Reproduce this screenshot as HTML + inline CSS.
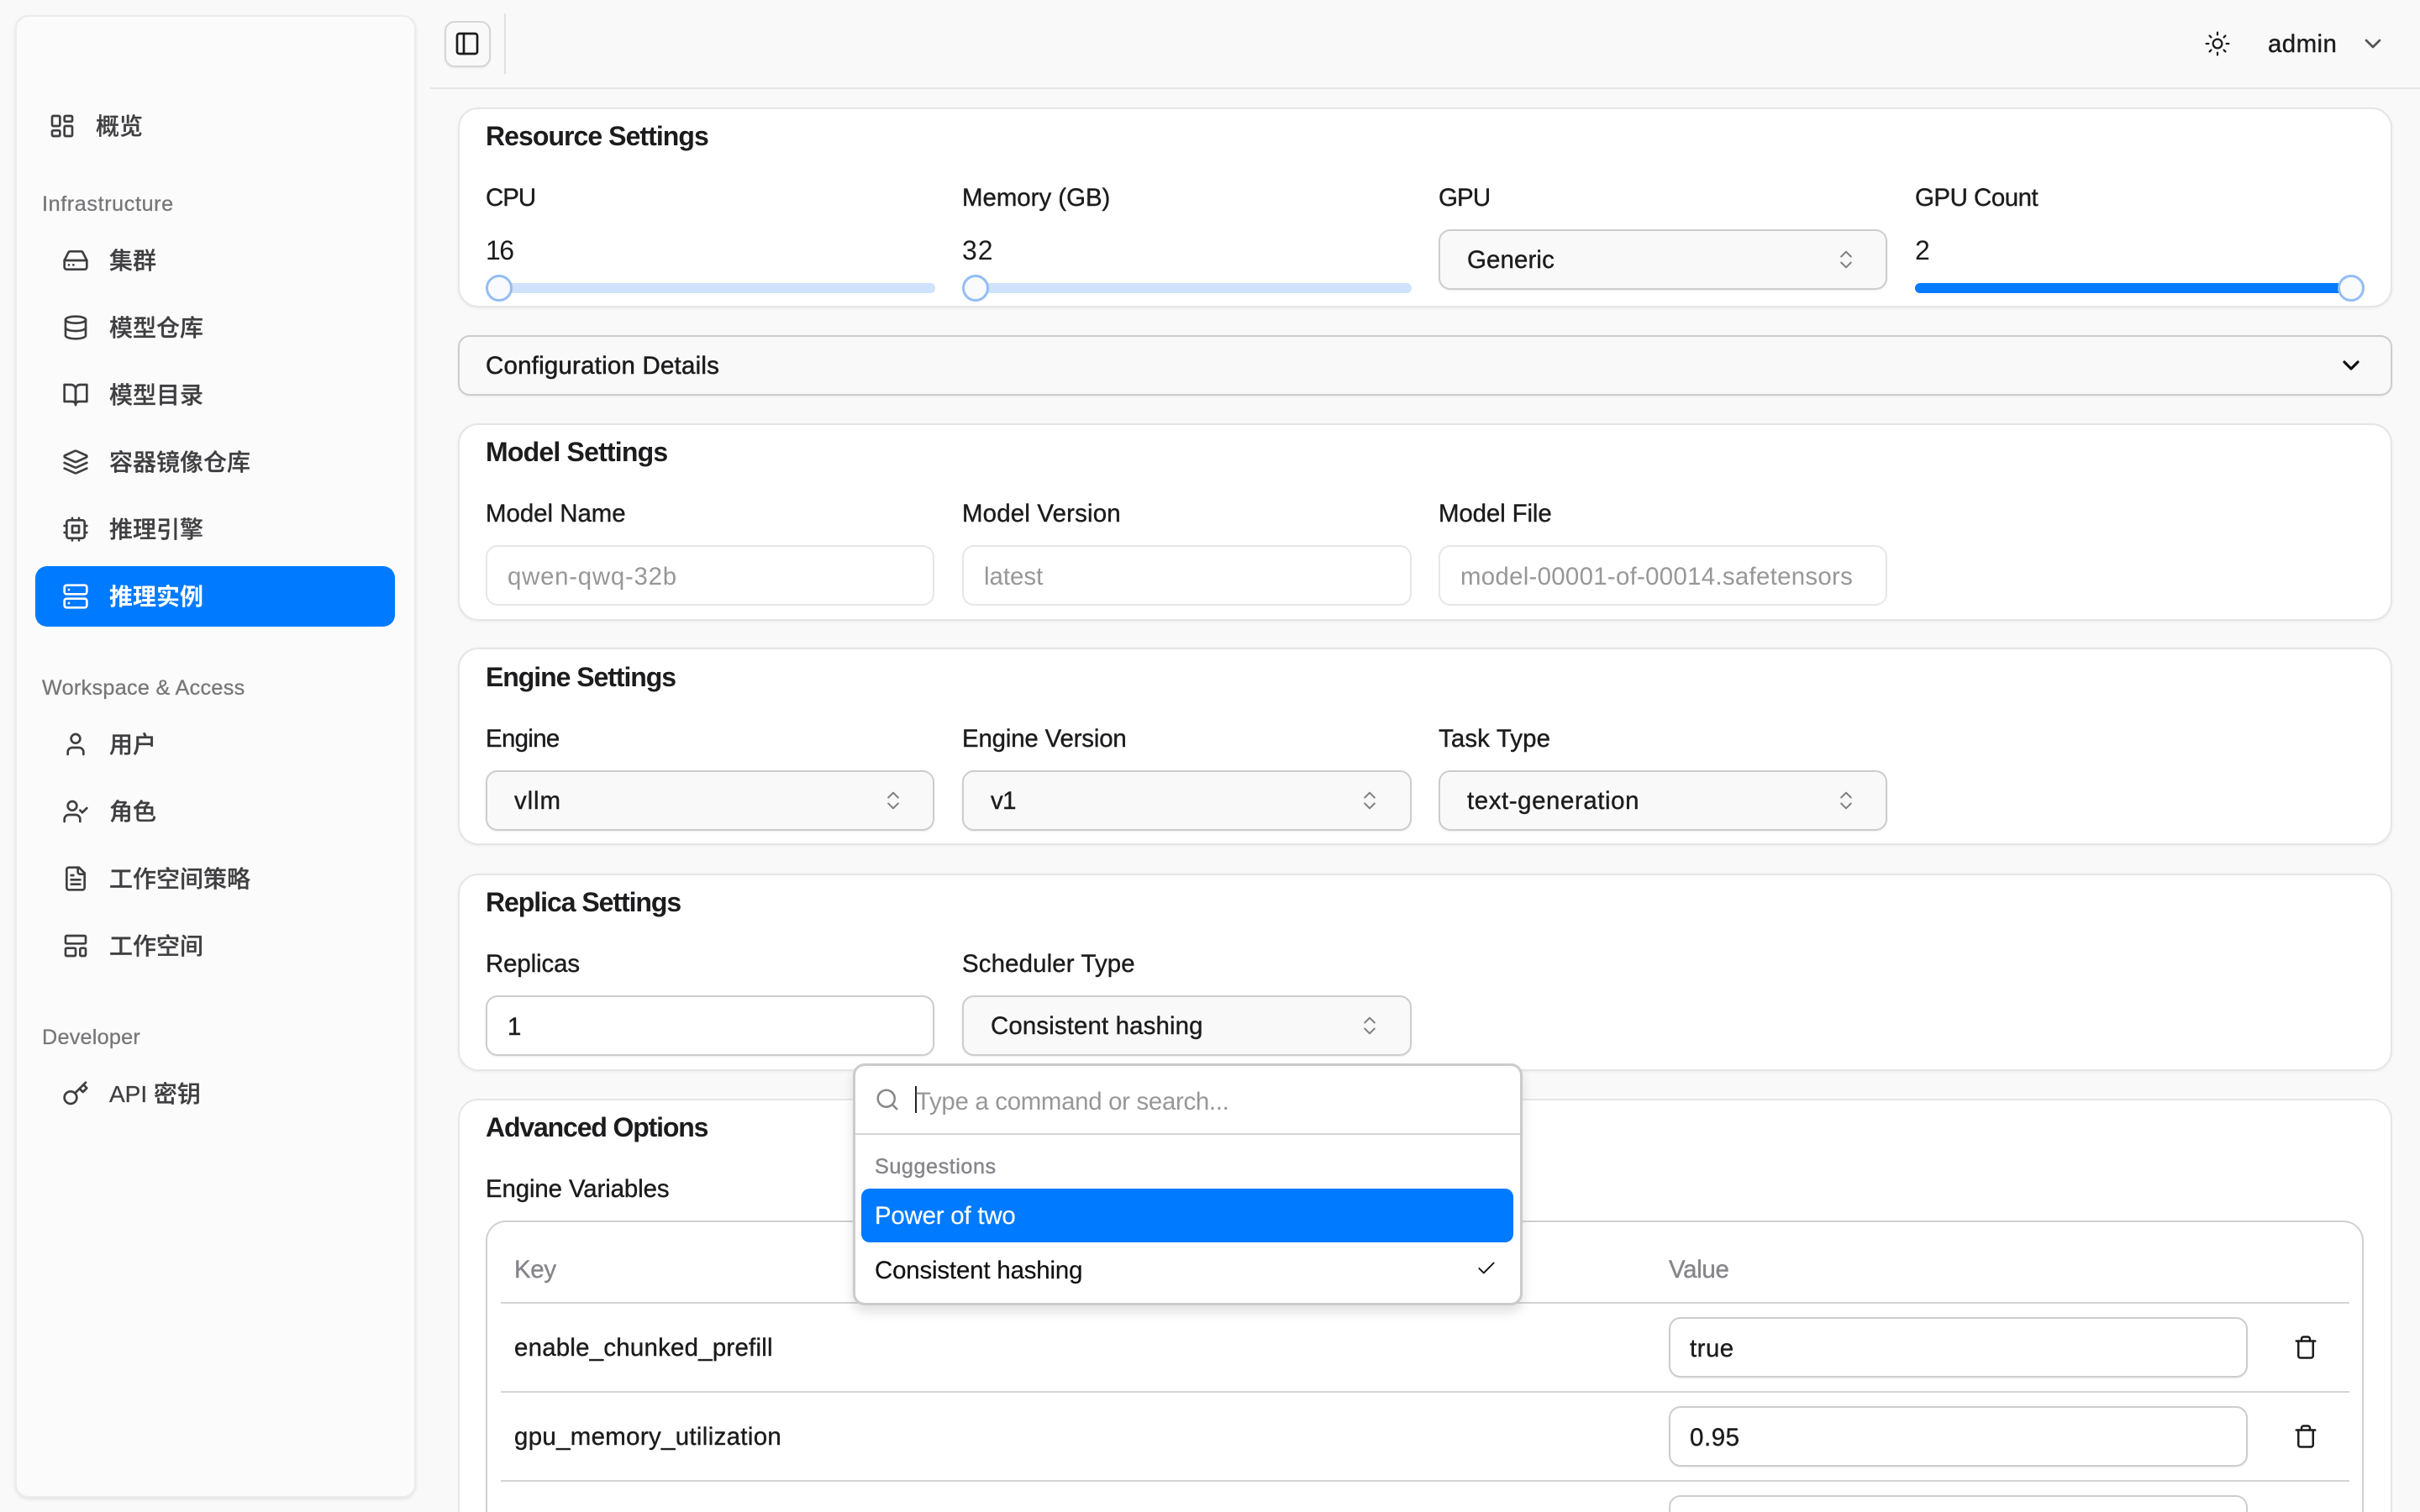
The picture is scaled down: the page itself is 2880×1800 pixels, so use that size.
<!DOCTYPE html>
<html lang="zh"><head><meta charset="utf-8"><title>Inference</title>
<style>
*{box-sizing:border-box;margin:0;padding:0}
html,body{width:2880px;height:1800px;overflow:hidden;background:#f9f9f9}
body{font-family:"Liberation Sans","Noto Sans CJK SC",sans-serif;color:#1c1c1e;font-size:28px}
#root{position:absolute;left:0;top:0;width:2880px;height:1800px;overflow:hidden}
.a{position:absolute}
.t{position:absolute;line-height:0;white-space:nowrap;font-size:29.4px;margin-top:1px;-webkit-text-stroke:.4px currentColor}
.side{color:#3f3f42}
.side .t{font-size:28px;font-weight:500;margin-top:0;-webkit-text-stroke:.25px currentColor}
.side .sec{color:#77777a;font-size:25.2px;font-weight:400;-webkit-text-stroke:.3px currentColor}
.card{position:absolute;left:545px;width:2302px;background:#fff;border:2px solid #e6e6e6;border-radius:24px;box-shadow:0 1px 3px rgba(0,0,0,.06)}
.t.h{font-size:32px;font-weight:700;letter-spacing:-.95px;margin-top:0;-webkit-text-stroke:0}
.sel{position:absolute;height:72px;background:#f9f9f9;border:2px solid #cdcdcd;border-radius:14px;box-shadow:0 1px 2px rgba(0,0,0,.08)}
.inp{position:absolute;height:72px;background:#fff;border:2px solid #e6e6e6;border-radius:14px}
.inw{position:absolute;height:72px;background:#fff;border:2px solid #cdcdcd;border-radius:14px;box-shadow:0 1px 2px rgba(0,0,0,.08)}
.t.ph{color:#979797;-webkit-text-stroke:0}
.track{position:absolute;height:12px;border-radius:6px;background:#cfe3fd}
.thumb{position:absolute;width:32px;height:32px;border-radius:50%;background:#f9fafb;border:3px solid #94bdf6}
.line{position:absolute;height:2px;background:#d4d4d4}
svg{position:absolute;fill:none;stroke:currentColor;stroke-width:2;stroke-linecap:round;stroke-linejoin:round}
.ud{width:28px;height:28px;color:#808080;stroke-width:1.7}
</style></head><body><div id="root">

<!-- sidebar -->
<div class="a" style="left:18px;top:18px;width:477px;height:1765px;background:#fbfbfb;border:2px solid #ececec;border-radius:16px;box-shadow:0 2px 5px rgba(0,0,0,.09)"></div>
<div class="a" style="left:42px;top:674px;width:428px;height:72px;background:#007aff;border-radius:14px"></div>

<div class="side">
<svg style="left:58px;top:134px;width:32px;height:32px" viewBox="0 0 24 24"><rect x="3" y="3" width="7" height="9" rx="1"/><rect x="14" y="3" width="7" height="5" rx="1"/><rect x="14" y="12" width="7" height="9" rx="1"/><rect x="3" y="16" width="7" height="5" rx="1"/></svg>
<div class="t" style="left:114px;top:151px">概览</div>
<div class="t sec" style="left:50px;top:243px;letter-spacing:.6px">Infrastructure</div>

<svg style="left:74px;top:294px;width:32px;height:32px" viewBox="0 0 24 24"><line x1="22" y1="12" x2="2" y2="12"/><path d="M5.45 5.11 2 12v6a2 2 0 0 0 2 2h16a2 2 0 0 0 2-2v-6l-3.45-6.89A2 2 0 0 0 16.76 4H7.24a2 2 0 0 0-1.79 1.11z"/><line x1="6" y1="16" x2="6.01" y2="16"/><line x1="10" y1="16" x2="10.01" y2="16"/></svg>
<div class="t" style="left:130px;top:311px">集群</div>

<svg style="left:74px;top:374px;width:32px;height:32px" viewBox="0 0 24 24"><ellipse cx="12" cy="5" rx="9" ry="3"/><path d="M3 5V19A9 3 0 0 0 21 19V5"/><path d="M3 12A9 3 0 0 0 21 12"/></svg>
<div class="t" style="left:130px;top:391px">模型仓库</div>

<svg style="left:74px;top:454px;width:32px;height:32px" viewBox="0 0 24 24"><path d="M2 3h6a4 4 0 0 1 4 4v14a3 3 0 0 0-3-3H2z"/><path d="M22 3h-6a4 4 0 0 0-4 4v14a3 3 0 0 1 3-3h7z"/></svg>
<div class="t" style="left:130px;top:471px">模型目录</div>

<svg style="left:74px;top:534px;width:32px;height:32px" viewBox="0 0 24 24"><path d="m12.83 2.18a2 2 0 0 0-1.66 0L2.6 6.08a1 1 0 0 0 0 1.83l8.58 3.91a2 2 0 0 0 1.66 0l8.58-3.9a1 1 0 0 0 0-1.83Z"/><path d="m22 17.65-9.17 4.16a2 2 0 0 1-1.66 0L2 17.65"/><path d="m22 12.65-9.17 4.16a2 2 0 0 1-1.66 0L2 12.65"/></svg>
<div class="t" style="left:130px;top:551px">容器镜像仓库</div>

<svg style="left:74px;top:614px;width:32px;height:32px" viewBox="0 0 24 24"><rect x="4" y="4" width="16" height="16" rx="2"/><rect x="9" y="9" width="6" height="6"/><path d="M15 2v2M15 20v2M2 15h2M2 9h2M20 15h2M20 9h2M9 2v2M9 20v2"/></svg>
<div class="t" style="left:130px;top:631px">推理引擎</div>

<div style="color:#fff">
<svg style="left:74px;top:694px;width:32px;height:32px" viewBox="0 0 24 24"><rect x="2" y="2" width="20" height="8" rx="2"/><rect x="2" y="14" width="20" height="8" rx="2"/><line x1="6" y1="6" x2="6.01" y2="6"/><line x1="6" y1="18" x2="6.01" y2="18"/></svg>
<div class="t" style="left:130px;top:711px;font-weight:700;-webkit-text-stroke:0">推理实例</div>
</div>

<div class="t sec" style="left:50px;top:819px;letter-spacing:.3px">Workspace &amp; Access</div>

<svg style="left:74px;top:870px;width:32px;height:32px" viewBox="0 0 24 24"><path d="M19 21v-2a4 4 0 0 0-4-4H9a4 4 0 0 0-4 4v2"/><circle cx="12" cy="7" r="4"/></svg>
<div class="t" style="left:130px;top:887px">用户</div>

<svg style="left:74px;top:950px;width:32px;height:32px" viewBox="0 0 24 24"><path d="M16 21v-2a4 4 0 0 0-4-4H6a4 4 0 0 0-4 4v2"/><circle cx="9" cy="7" r="4"/><polyline points="16 11 18 13 22 9"/></svg>
<div class="t" style="left:130px;top:967px">角色</div>

<svg style="left:74px;top:1030px;width:32px;height:32px" viewBox="0 0 24 24"><path d="M15 2H6a2 2 0 0 0-2 2v16a2 2 0 0 0 2 2h12a2 2 0 0 0 2-2V7Z"/><path d="M14 2v4a2 2 0 0 0 2 2h4"/><path d="M10 9H8"/><path d="M16 13H8"/><path d="M16 17H8"/></svg>
<div class="t" style="left:130px;top:1047px">工作空间策略</div>

<svg style="left:74px;top:1110px;width:32px;height:32px" viewBox="0 0 24 24"><rect width="18" height="7" x="3" y="3" rx="1"/><rect width="9" height="7" x="3" y="14" rx="1"/><rect width="5" height="7" x="16" y="14" rx="1"/></svg>
<div class="t" style="left:130px;top:1127px">工作空间</div>

<div class="t sec" style="left:50px;top:1235px;letter-spacing:.25px">Developer</div>

<svg style="left:74px;top:1286px;width:32px;height:32px" viewBox="0 0 24 24"><circle cx="7.5" cy="15.5" r="5.5"/><path d="m21 2-9.6 9.6"/><path d="m15.5 7.5 3 3L22 7l-3-3"/></svg>
<div class="t" style="left:130px;top:1303px">API 密钥</div>
</div>

<!-- header -->
<div class="a" style="left:512px;top:104px;width:2368px;height:2px;background:#e6e6e6"></div>
<div class="a" style="left:529px;top:25px;width:55px;height:55px;border:2px solid #d6d6d6;border-radius:12px;background:#f9f9f9;box-shadow:0 1px 2px rgba(0,0,0,.08)"></div>
<svg style="left:540px;top:36px;width:32px;height:32px;color:#1c1c1e" viewBox="0 0 24 24"><rect x="3" y="3" width="18" height="18" rx="2"/><path d="M9 3v18"/></svg>
<div class="a" style="left:600px;top:16px;width:2px;height:72px;background:#e0e0e0"></div>
<svg style="left:2623px;top:36px;width:32px;height:32px;color:#1c1c1e;stroke-width:1.7" viewBox="0 0 24 24"><circle cx="12" cy="12" r="4"/><path d="M12 2v2M12 20v2M4.93 4.93l1.41 1.41M17.66 17.66l1.41 1.41M2 12h2M20 12h2M6.34 17.66l-1.41 1.41M19.07 4.93l-1.41 1.41"/></svg>
<div class="t" style="left:2699px;top:52px;letter-spacing:.45px">admin</div>
<svg style="left:2808px;top:36px;width:32px;height:32px;color:#555" viewBox="0 0 24 24"><path d="m6 9 6 6 6-6"/></svg>

<!-- Resource -->
<div class="card" style="top:128px;height:238px"></div>
<div class="t h" style="left:578px;top:162px">Resource Settings</div>
<div class="t" style="left:578px;top:235px;letter-spacing:-.95px">CPU</div>
<div class="t" style="left:1145px;top:235px;letter-spacing:0">Memory (GB)</div>
<div class="t" style="left:1712px;top:235px;letter-spacing:-.8px">GPU</div>
<div class="t" style="left:2279px;top:235px;letter-spacing:-.45px">GPU Count</div>
<div class="t" style="left:578px;top:297px;font-size:32px;-webkit-text-stroke:0;letter-spacing:-1.5px">16</div>
<div class="t" style="left:1145px;top:297px;font-size:32px;-webkit-text-stroke:0;letter-spacing:1px">32</div>
<div class="t" style="left:2279px;top:297px;font-size:32px;-webkit-text-stroke:0">2</div>
<div class="track" style="left:579px;top:337px;width:534px"></div><div class="thumb" style="left:578px;top:327px"></div>
<div class="track" style="left:1145px;top:337px;width:535px"></div><div class="thumb" style="left:1145px;top:327px"></div>
<div class="track" style="left:2279px;top:337px;width:530px;background:#007aff"></div><div class="thumb" style="left:2782px;top:327px"></div>
<div class="sel" style="left:1712px;top:273px;width:534px"></div>
<div class="t" style="left:1746px;top:309px;letter-spacing:.15px">Generic</div>
<svg class="ud" style="left:2183px;top:295px" viewBox="0 0 24 24"><path d="m7 15 5 5 5-5"/><path d="m7 9 5-5 5 5"/></svg>

<!-- Config -->
<div class="a" style="left:545px;top:399px;width:2302px;height:72px;background:#f9f9f9;border:2px solid #cdcdcd;border-radius:14px;box-shadow:0 1px 2px rgba(0,0,0,.08)"></div>
<div class="t" style="left:578px;top:435px;-webkit-text-stroke:.55px currentColor;letter-spacing:.25px">Configuration Details</div>
<svg style="left:2782px;top:419px;width:32px;height:32px;color:#111;stroke-width:2.4" viewBox="0 0 24 24"><path d="m6 9 6 6 6-6"/></svg>

<!-- Model -->
<div class="card" style="top:504px;height:235px"></div>
<div class="t h" style="left:578px;top:538px;letter-spacing:-.8px">Model Settings</div>
<div class="t" style="left:578px;top:611px;letter-spacing:0">Model Name</div>
<div class="t" style="left:1145px;top:611px;letter-spacing:.2px">Model Version</div>
<div class="t" style="left:1712px;top:611px;letter-spacing:-.1px">Model File</div>
<div class="inp" style="left:578px;top:649px;width:534px"></div>
<div class="inp" style="left:1145px;top:649px;width:535px"></div>
<div class="inp" style="left:1712px;top:649px;width:534px"></div>
<div class="t ph" style="left:604px;top:686px;letter-spacing:.75px">qwen-qwq-32b</div>
<div class="t ph" style="left:1171px;top:686px;letter-spacing:0">latest</div>
<div class="t ph" style="left:1738px;top:686px;letter-spacing:.3px">model-00001-of-00014.safetensors</div>

<!-- Engine -->
<div class="card" style="top:771px;height:235px"></div>
<div class="t h" style="left:578px;top:806px;letter-spacing:-1.05px">Engine Settings</div>
<div class="t" style="left:578px;top:879px;letter-spacing:-.65px">Engine</div>
<div class="t" style="left:1145px;top:879px;letter-spacing:-.15px">Engine Version</div>
<div class="t" style="left:1712px;top:879px;letter-spacing:.15px">Task Type</div>
<div class="sel" style="left:578px;top:917px;width:534px"></div>
<div class="sel" style="left:1145px;top:917px;width:535px"></div>
<div class="sel" style="left:1712px;top:917px;width:534px"></div>
<div class="t" style="left:612px;top:953px;letter-spacing:.9px">vllm</div>
<div class="t" style="left:1179px;top:953px;letter-spacing:-.6px">v1</div>
<div class="t" style="left:1746px;top:953px;letter-spacing:.6px">text-generation</div>
<svg class="ud" style="left:1049px;top:939px" viewBox="0 0 24 24"><path d="m7 15 5 5 5-5"/><path d="m7 9 5-5 5 5"/></svg>
<svg class="ud" style="left:1616px;top:939px" viewBox="0 0 24 24"><path d="m7 15 5 5 5-5"/><path d="m7 9 5-5 5 5"/></svg>
<svg class="ud" style="left:2183px;top:939px" viewBox="0 0 24 24"><path d="m7 15 5 5 5-5"/><path d="m7 9 5-5 5 5"/></svg>

<!-- Replica -->
<div class="card" style="top:1040px;height:235px"></div>
<div class="t h" style="left:578px;top:1074px;letter-spacing:-1.05px">Replica Settings</div>
<div class="t" style="left:578px;top:1147px;letter-spacing:-.1px">Replicas</div>
<div class="t" style="left:1145px;top:1147px;letter-spacing:.15px">Scheduler Type</div>
<div class="inw" style="left:578px;top:1185px;width:534px"></div>
<div class="t" style="left:604px;top:1222px">1</div>
<div class="sel" style="left:1145px;top:1185px;width:535px"></div>
<div class="t" style="left:1179px;top:1221px;letter-spacing:.15px">Consistent hashing</div>
<svg class="ud" style="left:1616px;top:1207px" viewBox="0 0 24 24"><path d="m7 15 5 5 5-5"/><path d="m7 9 5-5 5 5"/></svg>

<!-- Advanced: card, table and third input are cut off at the frame edge -->
<div class="card" style="top:1308px;height:492px;border-bottom:0;border-radius:24px 24px 0 0;box-shadow:none"></div>
<div class="t h" style="left:578px;top:1342px;letter-spacing:-1.15px">Advanced Options</div>
<div class="t" style="left:578px;top:1415px;letter-spacing:-.1px">Engine Variables</div>
<div class="a" style="left:578px;top:1453px;width:2235px;height:347px;border:2px solid #d0d0d0;border-bottom:0;border-radius:24px 24px 0 0"></div>
<div class="t" style="left:612px;top:1511px;color:#85858a;letter-spacing:-.3px">Key</div>
<div class="t" style="left:1986px;top:1511px;color:#85858a;letter-spacing:-.3px">Value</div>
<div class="line" style="left:596px;top:1550px;width:2200px"></div>
<div class="line" style="left:596px;top:1656px;width:2200px"></div>
<div class="line" style="left:596px;top:1762px;width:2200px"></div>
<div class="t" style="left:612px;top:1604px;letter-spacing:.25px">enable_chunked_prefill</div>
<div class="t" style="left:612px;top:1710px;letter-spacing:.35px">gpu_memory_utilization</div>
<div class="inw" style="left:1986px;top:1568px;width:689px"></div>
<div class="inw" style="left:1986px;top:1674px;width:689px"></div>
<div class="inw" style="left:1986px;top:1780px;width:689px;height:20px;border-bottom:0;border-radius:14px 14px 0 0;box-shadow:none"></div>
<div class="t" style="left:2011px;top:1605px;letter-spacing:.5px">true</div>
<div class="t" style="left:2011px;top:1711px;letter-spacing:.6px">0.95</div>
<svg style="left:2729px;top:1589px;width:30px;height:30px" viewBox="0 0 24 24"><path d="M3 6h18"/><path d="M19 6v14a2 2 0 0 1-2 2H7a2 2 0 0 1-2-2V6"/><path d="M8 6V4a2 2 0 0 1 2-2h4a2 2 0 0 1 2 2v2"/></svg>
<svg style="left:2729px;top:1695px;width:30px;height:30px" viewBox="0 0 24 24"><path d="M3 6h18"/><path d="M19 6v14a2 2 0 0 1-2 2H7a2 2 0 0 1-2-2V6"/><path d="M8 6V4a2 2 0 0 1 2-2h4a2 2 0 0 1 2 2v2"/></svg>

<!-- Popover -->
<div class="a" style="left:1015px;top:1266px;width:797px;height:288px;background:#fff;border:3px solid #cbcbcb;border-radius:14px;box-shadow:0 8px 14px rgba(0,0,0,.12)"></div>
<div class="a" style="left:1018px;top:1349px;width:791px;height:2px;background:#d6d6d6"></div>
<svg style="left:1041px;top:1294px;width:30px;height:30px;color:#888" viewBox="0 0 24 24"><circle cx="11" cy="11" r="8"/><path d="m21 21-4.3-4.3"/></svg>
<div class="a" style="left:1089px;top:1293px;width:2px;height:32px;background:#222"></div>
<div class="t ph" style="left:1090px;top:1311px;letter-spacing:-.3px">Type a command or search...</div>
<div class="t" style="left:1041px;top:1388px;font-size:25.2px;color:#85858a;letter-spacing:.55px">Suggestions</div>
<div class="a" style="left:1025px;top:1415px;width:776px;height:64px;background:#007aff;border-radius:10px"></div>
<div class="t" style="left:1041px;top:1447px;color:#fff;letter-spacing:-.2px;-webkit-text-stroke:.2px currentColor">Power of two</div>
<div class="t" style="left:1041px;top:1512px;color:#111;letter-spacing:-.15px;-webkit-text-stroke:.2px currentColor">Consistent hashing</div>
<svg style="left:1756px;top:1497px;width:26px;height:26px;color:#111;stroke-width:1.7" viewBox="0 0 24 24"><path d="M20 6 9 17l-5-5"/></svg>

</div></body></html>
